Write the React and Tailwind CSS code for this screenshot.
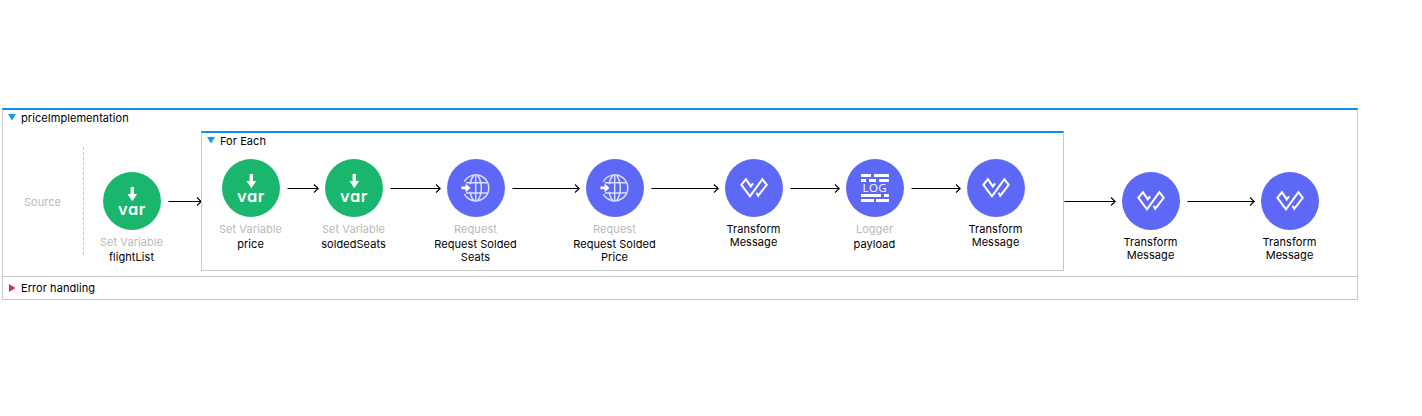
import React from "react";

function VarIcon() {
  return (
    <svg width="58" height="58" viewBox="0 0 58 58" className="block">
      <circle cx="29" cy="29" r="29" fill="#1bb66e" />
      <path d="M27.6 15h3.4v7h3.1l-4.8 7.3-4.8-7.3h3.1z" fill="#fff" />
      <text
        x="15"
        y="43.4"
        fill="#fff"
        className="font-['Inter',sans-serif] text-[16.5px] font-semibold tracking-[0.5px] [font-feature-settings:'cv11']"
      >
        var
      </text>
    </svg>
  );
}

function RequestIcon() {
  return (
    <svg width="58" height="58" viewBox="0 0 58 58" className="block">
      <circle cx="29" cy="29" r="29" fill="#5d68f6" />
      <g fill="none" stroke="#dcdffd" strokeWidth="1.5">
        <path d="M17.4 22.6A13 13 0 1 1 17.4 35.2" />
        <path d="M27 16C24.4 19 23.5 22 23.3 25.3M23.3 32.6C23.5 36 24.4 39 27 41.8" />
        <path d="M30.6 16C35.6 23.4 35.6 34.6 30.6 41.8" />
        <path d="M19 23.7H40.6M19 34.1H40.6" />
        <path d="M28.7 16V42" />
      </g>
      <path d="M14.4 27.5h4.2v-3l4.9 4.4-4.9 4.4v-3h-4.2z" fill="#fff" />
    </svg>
  );
}

function TransformIcon() {
  return (
    <svg width="58" height="58" viewBox="0 0 58 58" className="block">
      <circle cx="29" cy="29" r="29" fill="#5d68f6" />
      <path
        d="M28.1 24.4L25.8 27.4L20.9 20.2L16.4 25.8L25 37.3L37.4 20.2L41.7 25.8L33.2 36.8L31.6 33.8"
        fill="none"
        stroke="#fff"
        strokeWidth="2.1"
      />
    </svg>
  );
}

function LoggerIcon() {
  return (
    <svg width="58" height="58" viewBox="0 0 58 58" className="block">
      <circle cx="29" cy="29" r="29" fill="#5d68f6" />
      <path
        d="M15 15h10v3H15zM28 15h15v3H28zM15 20h5v3h-5zM23 20h7v3h-7zM33 20h10v3H33zM15 35h20v3H15zM38 35h5v3h-5zM15 40h13v3H15zM30 40h13v3H30z"
        fill="#fff"
      />
      <text
        x="16.6"
        y="33.2"
        fill="#fff"
        textLength="24"
        className="font-['Open_Sans',sans-serif] text-[11.5px]"
      >
        LOG
      </text>
    </svg>
  );
}

const ICONS = {
  variable: VarIcon,
  request: RequestIcon,
  transform: TransformIcon,
  logger: LoggerIcon,
};

function Node({ icon, type, lines }) {
  const Icon = ICONS[icon];
  return (
    <div className="flex w-[58px] shrink-0 flex-col items-center whitespace-nowrap">
      <Icon />
      {type && (
        <span className="mt-[5px] -mb-[5px] pr-px leading-[15px] text-[#b9b9b9]">{type}</span>
      )}
      <div className="mt-[6px] flex flex-col items-center pr-px leading-[13px]">
        {lines.map((line) => (
          <span key={line}>{line}</span>
        ))}
      </div>
    </div>
  );
}

function Arrow({ width, className }) {
  return (
    <svg
      width={width}
      height="9"
      viewBox={`0 0 ${width} 9`}
      className={`block shrink-0 ${className}`}
      fill="none"
      stroke="#000"
    >
      <path d={`M0.5 4.5H${width - 0.6}M${width - 5} 0.5L${width - 0.8} 4.5L${width - 5} 8.5`} strokeWidth="1.1" />
    </svg>
  );
}

function Caret({ open }) {
  return open ? (
    <svg width="8" height="7" viewBox="0 0 8 7" className="block" fill="#0f9bf7">
      <path d="M0 0h8L4 6.5z" />
    </svg>
  ) : (
    <svg width="7" height="8" viewBox="0 0 7 8" className="block" fill="#d43452">
      <path d="M0 0v8l6.5-4z" />
    </svg>
  );
}

function ForEach() {
  return (
    <section className="h-[140px] w-[863px] shrink-0 border border-t-2 border-[#c8c8c8] border-t-[#118ee9]">
      <header className="flex h-[26px] items-start pl-[5px]">
        <div className="mt-[4px] w-[13px]">
          <Caret open />
        </div>
        <span className="leading-[17px]">For Each</span>
      </header>
      <div className="flex items-start pl-[20px]">
        <Node icon="variable" type="Set Variable" lines={["price"]} />
        <Arrow width={32} className="mt-[25px] mr-[6px] ml-[7px]" />
        <Node icon="variable" type="Set Variable" lines={["soldedSeats"]} />
        <Arrow width={51} className="mt-[25px] mr-[6px] ml-[7px]" />
        <Node icon="request" type="Request" lines={["Request Solded", "Seats"]} />
        <Arrow width={68} className="mt-[25px] mr-[6px] ml-[7px]" />
        <Node icon="request" type="Request" lines={["Request Solded", "Price"]} />
        <Arrow width={68} className="mt-[25px] mr-[6px] ml-[7px]" />
        <Node icon="transform" lines={["Transform", "Message"]} />
        <Arrow width={50} className="mt-[25px] mr-[6px] ml-[7px]" />
        <Node icon="logger" type="Logger" lines={["payload"]} />
        <Arrow width={50} className="mt-[25px] mr-[6px] ml-[7px]" />
        <Node icon="transform" lines={["Transform", "Message"]} />
      </div>
    </section>
  );
}

export default function App() {
  return (
    <main className="h-[416px] w-[1422px] overflow-hidden bg-white pt-[108px] pl-[2px] font-['Inter',sans-serif] text-[11px] tracking-[0.06px] text-black">
      <section className="w-[1356px] border border-t-2 border-[#c8c8c8] border-t-[#118ee9]">
        <header className="flex h-[21px] items-start pl-[5px]">
          <div className="mt-[4px] w-[13px]">
            <Caret open />
          </div>
          <span className="leading-[17px]">priceImplementation</span>
        </header>
        <div className="flex h-[145px] items-start">
          <div className="mt-[16px] flex h-[108px] w-[80px] shrink-0 items-center justify-center pt-[3px] pr-px text-[#b9b9b9]">
            Source
          </div>
          <svg width="1" height="108" viewBox="0 0 1 108" className="mt-[16px] mr-[19px] block shrink-0">
            <path d="M0.5 0V108" stroke="#c8c8c8" strokeDasharray="3 2" />
          </svg>
          <div className="mt-[41px] flex">
            <Node icon="variable" type="Set Variable" lines={["flightList"]} />
            <Arrow width={34} className="mt-[25px] -mr-[1px] ml-[7px]" />
          </div>
          <ForEach />
          <div className="mt-[41px] flex">
            <Arrow width={52} className="mt-[25px] mr-[6px]" />
            <Node icon="transform" lines={["Transform", "Message"]} />
            <Arrow width={68} className="mt-[25px] mr-[6px] ml-[7px]" />
            <Node icon="transform" lines={["Transform", "Message"]} />
          </div>
        </div>
        <footer className="flex h-[23px] items-center border-t border-[#c8c8c8] pl-[6px]">
          <div className="w-[12px]">
            <Caret />
          </div>
          <span className="leading-[17px]">Error handling</span>
        </footer>
      </section>
    </main>
  );
}
